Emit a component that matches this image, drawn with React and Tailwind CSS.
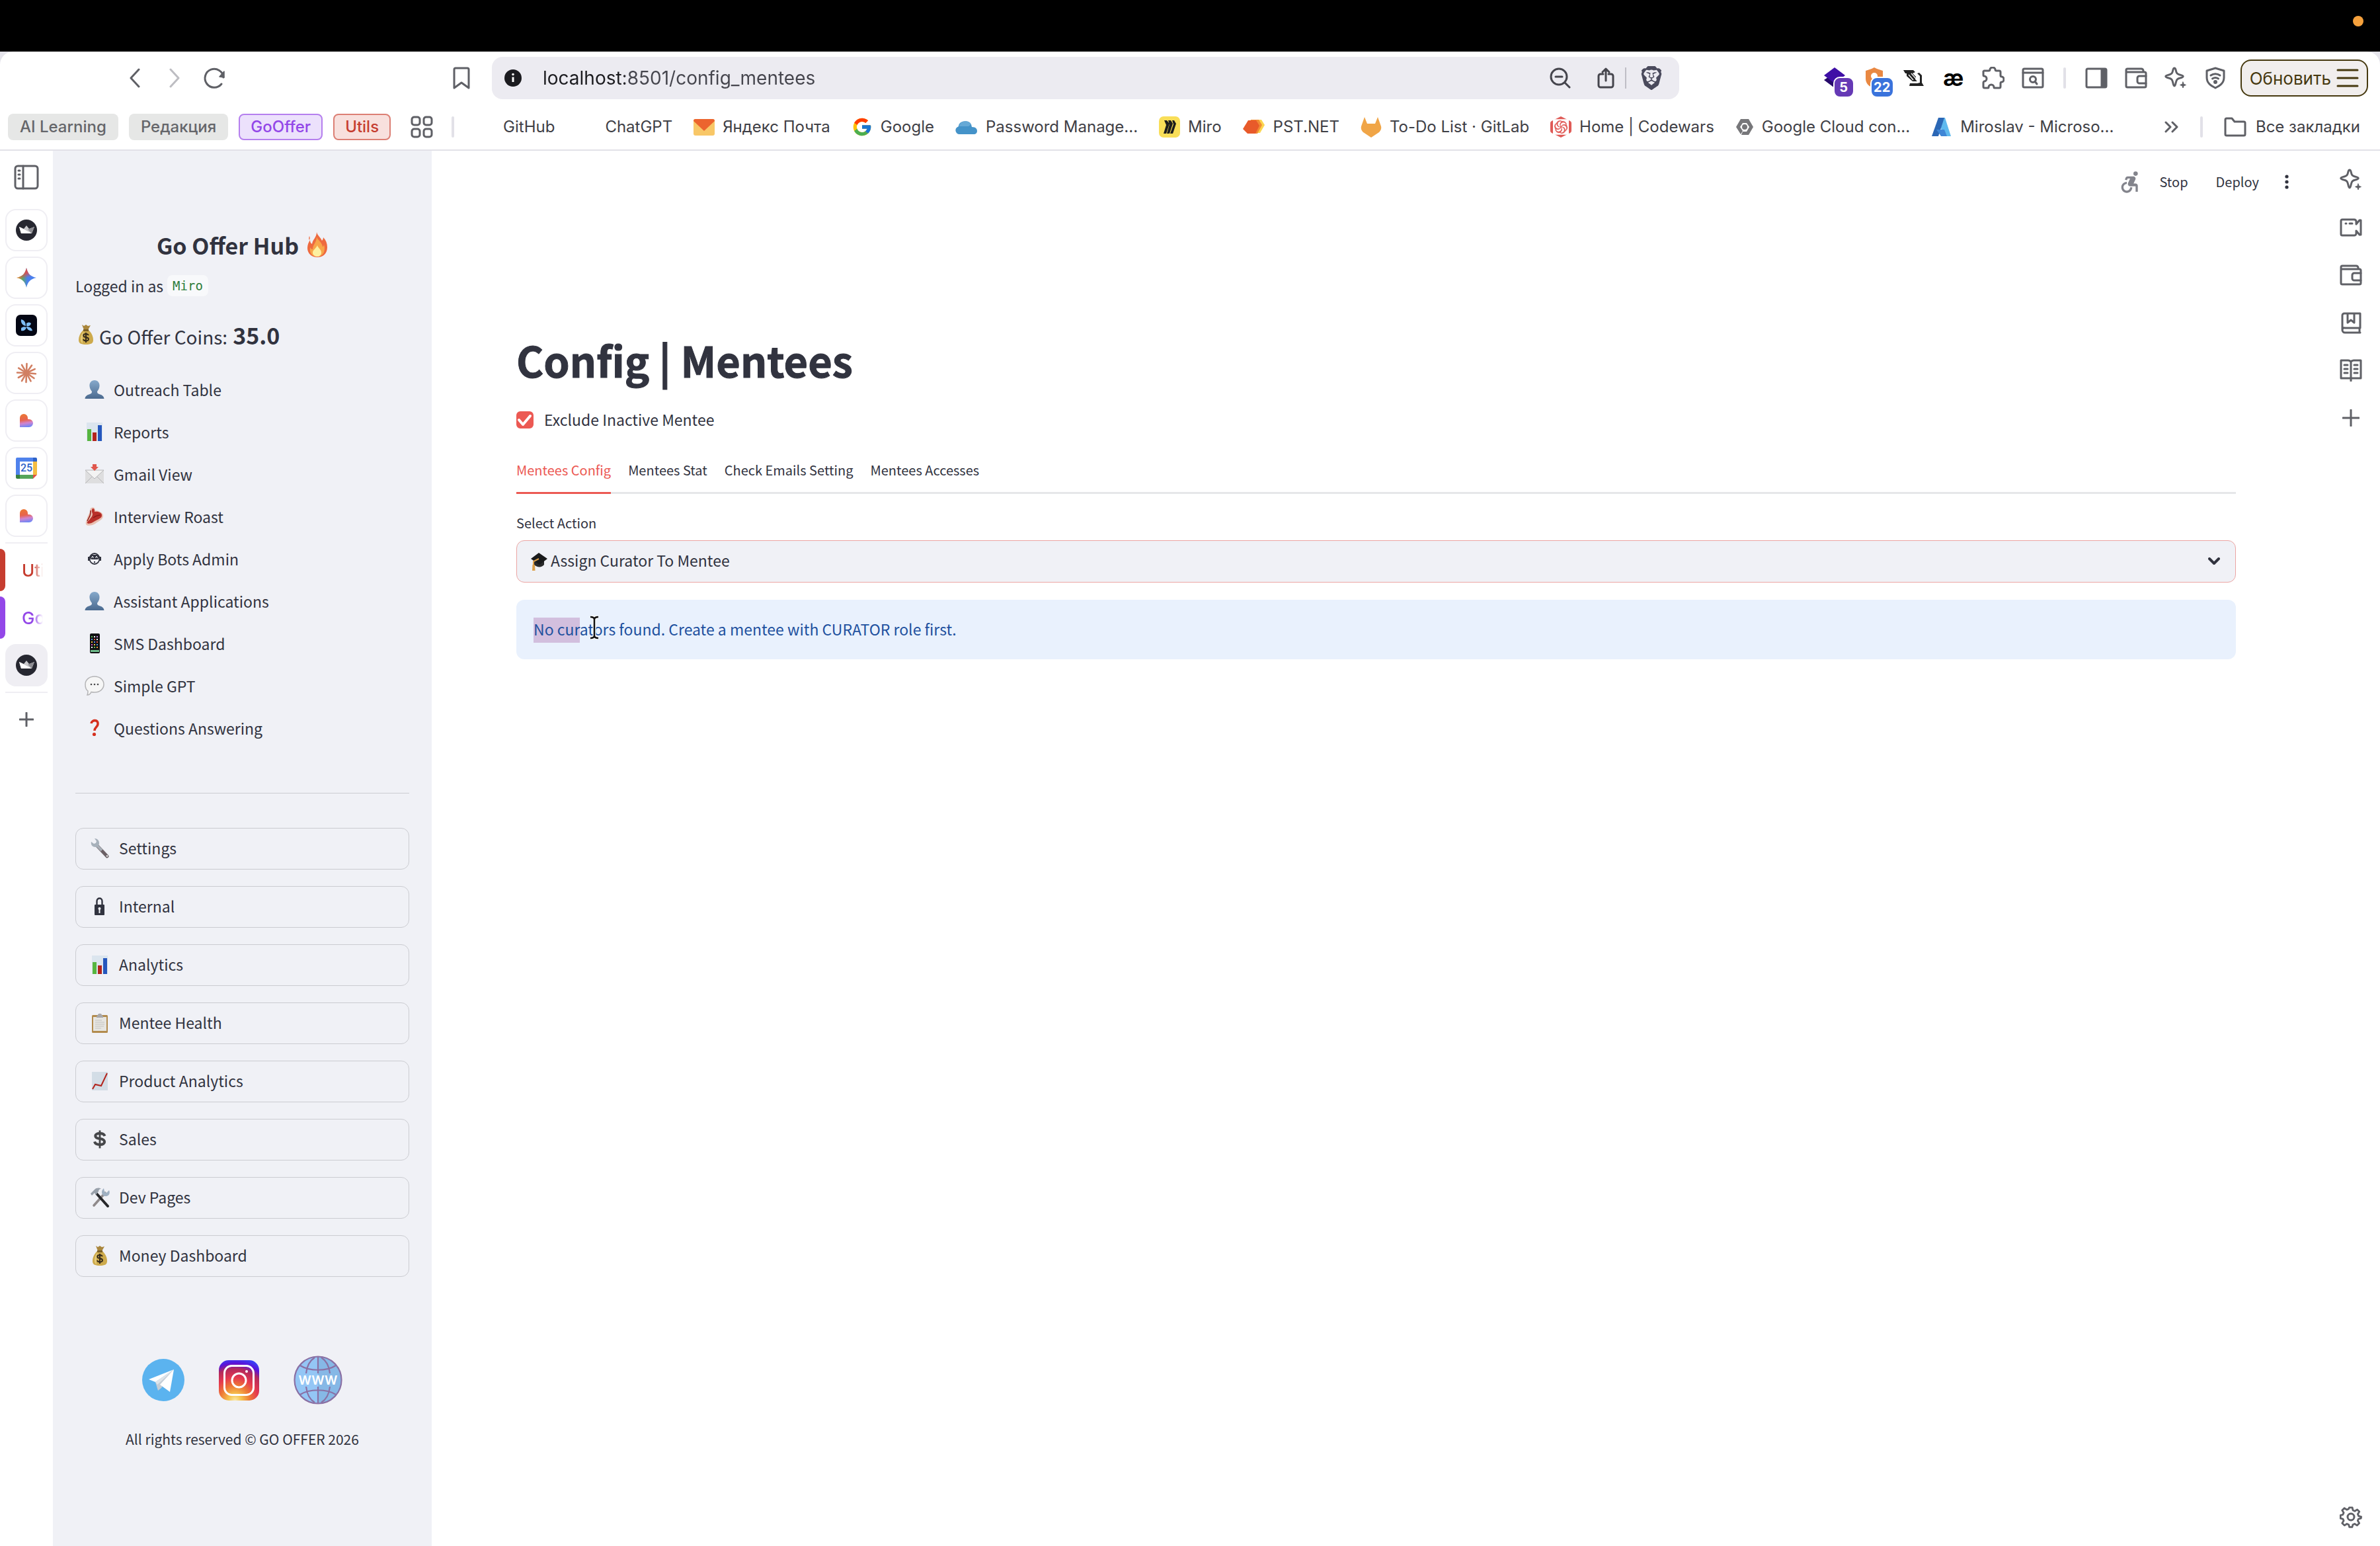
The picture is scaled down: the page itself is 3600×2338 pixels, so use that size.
import React, { useState } from 'react';
import { FcGoogle } from 'react-icons/fc';
import { SiBrave, SiCodewars } from 'react-icons/si';
import { MdAccessibleForward } from 'react-icons/md';

// Shared wrapper for the outlined browser icons
const Line = ({ w = 34, h = 34, sw = 3, className = '', children }) => (
  <svg
    width={w}
    height={h}
    viewBox={`0 0 ${w} ${h}`}
    fill="none"
    stroke="currentColor"
    strokeWidth={sw}
    strokeLinecap="round"
    strokeLinejoin="round"
    className={`shrink-0 ${className}`}
    aria-hidden="true"
  >
    {children}
  </svg>
);

const Pic = ({ w = 30, h = 30, className = '', children }) => (
  <svg width={w} height={h} viewBox={`0 0 ${w} ${h}`} className={`shrink-0 ${className}`} aria-hidden="true">
    {children}
  </svg>
);

/* ---------- browser icons ---------- */

const SparkleIcon = () => (
  <Line>
    <path d="M15 2c1.300 0 1.700 1 2.200 3.200.9 4.500 2 6 6.500 7 2.500.6 4.500.9 4.500 2.400s-2 1.900-4.500 2.400c-4.500 1-5.600 2.500-6.500 7C16.700 26.500 16.300 29 15 29s-1.700-2.500-2.200-5c-.9-4.500-2-6-6.500-7-2.500-.5-4.500-.9-4.500-2.400s2-1.800 4.500-2.400c4.500-1 5.600-2.500 6.500-7C13.300 3 13.700 2 15 2z" />
    <path d="M28 23l1.200 3.300 3.300 1.200-3.300 1.200L28 32l-1.200-3.300-3.300-1.200 3.300-1.200z" fill="currentColor" strokeWidth="1" />
  </Line>
);

const WalletIcon = () => (
  <Line>
    <path d="M2 8v21a2 2 0 0 0 2 2h26a2 2 0 0 0 2-2V10a2 2 0 0 0-2-2zM2 8V5a2 2 0 0 1 2-2h21a3 3 0 0 1 3 3v2" />
    <path d="M32 14H22a3 3 0 0 0-3 3v5a3 3 0 0 0 3 3h10" />
  </Line>
);

const PuzzleIcon = () => (
  <Line>
    <path d="M3 6h7q2 0 2-2a4 3 0 0 1 8 0q0 2 2 2h4a2 2 0 0 1 2 2v5q0 2 2 2a3 4 0 0 1 0 8q-2 0-2 2v5a2 2 0 0 1-2 2h-7q-1 0-1-1a4 4 0 0 0-8 0q0 1-1 1H4a2 2 0 0 1-2-2v-6q0-1 1-2a4 4 0 0 0 0-8q-1 0-1-2V7z" />
  </Line>
);

const PageSearchIcon = () => (
  <Line>
    <rect x="2" y="3" width="30" height="28" rx="2" />
    <path d="M2 9h30" />
    <circle cx="17" cy="19" r="4.500" />
    <path d="M20 22l3 4" />
  </Line>
);

const SidePanelIcon = () => (
  <Line>
    <rect x="2" y="3" width="30" height="28" rx="2" />
    <path d="M25 4h6v26h-6z" fill="currentColor" />
  </Line>
);

const ShieldWifiIcon = () => (
  <Line>
    <path d="M17 2l13 4v10c0 8-5 12-13 16C9 28 4 24 4 16V6z" />
    <path d="M10 13c4-3 10-3 14 0M12.500 18c3-2 6-2 9 0" />
    <circle cx="17" cy="23" r="1.500" fill="currentColor" />
  </Line>
);

const CameraIcon = () => (
  <Line>
    <path d="M4 5h18a3 3 0 0 1 3 3v4l5-6h2v22h-2l-5-6v4a3 3 0 0 1-3 3H4a2 2 0 0 1-2-2V7a2 2 0 0 1 2-2z" />
    <path d="M9 11h1M15 11h4" />
  </Line>
);

const BookIcon = () => (
  <Line>
    <path d="M31 25V3H7a3 3 0 0 0-3 3v22a4 4 0 0 0 4 4h23M4 28a3 3 0 0 1 4-3h23M30 25v7M12 3v14l5-4 5 4V3" />
  </Line>
);

const OpenBookIcon = () => (
  <Line>
    <path d="M17 4c-1-1-2-2-4-2H2v27h15V4zM17 4c1-1 2-2 4-2h11v27H17v4" />
    <path d="M7 9h5M7 15h5M7 21h5M22 9h5M22 15h5M22 21h5" />
  </Line>
);

const PlusIcon = ({ size = 26 }) => (
  <Line w={size} h={size}>
    <path d={`M${size / 2} 1v${size - 2}M1 ${size / 2}h${size - 2}`} />
  </Line>
);

const GearIcon = () => (
  <Line>
    <path d="M14.500 2h5l1 4.500 3 1.300 4-2.500 3.400 3.400-2.500 4 1.300 3L34 17l-.5 2.500-4 1-1.200 3 2.500 4-3.500 3.500-4-2.500-3 1.300-1 4h-4.600l-1-4-3-1.300-4 2.500L3 27.500l2.500-4-1.300-3-4-1v-5l4-1 1.300-3-2.500-4L6.500 3l4 2.500 3-1.300z" transform="translate(1 1) scale(.93)" />
    <circle cx="17" cy="17" r="5" />
  </Line>
);

/* ---------- bookmark logos ---------- */

const MailLogo = () => (
  <Pic w={32} h={32}>
    <rect y="4" width="32" height="25" rx="3" fill="#f8c767" />
    <path d="M3 4h26a3 3 0 0 1 3 3L16 22 0 7a3 3 0 0 1 3-3z" fill="#ec642e" />
  </Pic>
);

const CloudLogo = () => (
  <Pic w={34} h={32}>
    <path d="M6 27a6 6 0 0 1-4-10l3-2c0-8 14-11 19-3l1 4c6 0 8 3 8 6s-2 5-5 5z" fill="#4493c9" />
    <path d="M6 15c0-8 14-11 18-3l-4 3z" fill="#66a9d6" />
  </Pic>
);

const MiroLogo = () => (
  <Pic w={32} h={32}>
    <rect width="32" height="32" rx="7" fill="#f9de58" />
    <path d="M8 6h4l4 5-5 15H7l4-13zM14 6h4l3 5-5 15h-4l4-14zM20 6h3l3 5-5 15h-4l5-14z" fill="#1c1c1c" />
  </Pic>
);

const PstLogo = () => (
  <Pic w={34} h={32}>
    <path d="M16 5h12l5 8-7 12H14z" fill="#fbd54f" />
    <path d="M12 5h12l5 8-7 13H9z" fill="#f28b33" />
    <path d="M8 6h12l5 8-6 12H7L0 19z" fill="#e85a2a" />
  </Pic>
);

const GitlabLogo = () => (
  <Pic w={32} h={32}>
    <path d="M6 1l4 10h12l4-10 5 14c1 4-1 7-3 9L16 32 4 24c-2-2-4-5-3-9z" fill="#f0a547" />
  </Pic>
);

const CodewarsLogo = () => (
  <span className="relative flex size-8 shrink-0 items-center justify-center">
    <Pic w={32} h={32} className="absolute inset-0">
      <path d="M16 0l14 7q2 1 2 3v12q0 2-2 3l-14 7-14-7q-2-1-2-3V10q0-2 2-3z" fill="#e05b57" />
    </Pic>
    <SiCodewars className="relative size-6 text-white" />
  </span>
);

const GcloudLogo = () => (
  <Pic w={28} h={28}>
    <path d="M8 2h12l2 4-5 2H11l-4 6 4 6-3 5L1 14zM20 2l7 12-7 12H9l2-5h6l4-7-4-6z" fill="#77777a" />
    <circle cx="14" cy="14" r="4" fill="#77777a" />
  </Pic>
);

const AzureLogo = () => (
  <Pic w={32} h={32}>
    <path d="M11 2h10l9 28H18z" fill="#5fb9ee" />
    <path d="M11 2h9L11 30H1z" fill="#2b67b5" />
    <path d="M8 20h12l4 10H15z" fill="#3f86d6" />
  </Pic>
);

/* ---------- vertical tab logos ---------- */

const CrownLogo = () => (
  <Pic w={32} h={32}>
    <circle cx="16" cy="16" r="16" fill="#262730" />
    <path d="M5 11l7 3 4-5 4 5 8-3-4 10H8z" fill="#c9c9cc" />
    <path d="M5 11l19 10H8z" fill="#fff" />
    <path d="M28 11l-4 10-6-6z" fill="#8d8d92" />
  </Pic>
);

const GeminiLogo = () => (
  <Pic w={30} h={30}>
    <defs>
      <linearGradient id="gemA" x1="0" y1=".5" x2="1" y2=".5">
        <stop offset="0" stopColor="#f5c02e" />
        <stop offset=".3" stopColor="#5aa767" />
        <stop offset=".55" stopColor="#4a80ee" />
        <stop offset="1" stopColor="#4a80ee" />
      </linearGradient>
      <linearGradient id="gemB" x1=".4" y1="0" x2=".55" y2=".5">
        <stop offset="0" stopColor="#e8493f" />
        <stop offset=".55" stopColor="#e8493f" stopOpacity=".8" />
        <stop offset="1" stopColor="#e8493f" stopOpacity="0" />
      </linearGradient>
    </defs>
    <path d="M15 0c2 9 6 13 15 15-9 2-13 6-15 15C13 21 9 17 0 15 9 13 13 9 15 0z" fill="url(#gemA)" />
    <path d="M15 0c2 9 6 13 15 15-9 2-13 6-15 15C13 21 9 17 0 15 9 13 13 9 15 0z" fill="url(#gemB)" />
  </Pic>
);

const PetalLogo = () => (
  <Pic w={32} h={32}>
    <rect width="32" height="32" rx="7" fill="#040714" />
    <path d="M8 7c5 1 7 5 7 10-5-1-8-5-7-10zM16 13c3-2 5-2 7 0-1 4-4 5-7 4zM8 20c3-2 5-2 8-1-1 4-4 6-8 5zM16 18c5 0 8 2 9 6-4 1-8-1-9-6z" fill="#7dbcf5" />
  </Pic>
);

const BurstLogo = () => (
  <Pic w={32} h={32}>
    {[5, 35, 62, 92, 120, 150, 182, 212, 240, 272, 305, 335].map((deg) => (
      <path
        key={deg}
        d="M16 16h14"
        stroke="#d17f62"
        strokeWidth="2.600"
        strokeLinecap="round"
        transform={`rotate(${deg} 16 16)`}
      />
    ))}
    <circle cx="16" cy="16" r="4.500" fill="#d17f62" />
  </Pic>
);

const HeartLogo = () => (
  <Pic w={20} h={20}>
    <defs>
      <linearGradient id="lov" x1=".3" y1="0" x2=".45" y2="1">
        <stop offset="0" stopColor="#ec7733" />
        <stop offset=".45" stopColor="#e7634f" />
        <stop offset=".7" stopColor="#d084d0" />
        <stop offset="1" stopColor="#6d86f6" />
      </linearGradient>
    </defs>
    <path d="M0 6a6 6 0 0 1 12 0v2h2a6 6 0 0 1 0 12H0z" fill="url(#lov)" />
  </Pic>
);

const CalendarLogo = () => (
  <span className="relative flex size-8 items-center justify-center">
    <Pic w={32} h={32} className="absolute inset-0">
      <path d="M2 0h24v6H6v20H0V2a2 2 0 0 1 2-2z" fill="#4f82ec" />
      <path d="M26 0h4a2 2 0 0 1 2 2v4h-6z" fill="#2d62c8" />
      <path d="M26 6h6v20h-6z" fill="#f4bd42" />
      <path d="M6 26h20v6H6z" fill="#55a55a" />
      <path d="M0 26h6v6H2a2 2 0 0 1-2-2z" fill="#377f40" />
      <path d="M26 26h6l-6 6z" fill="#df5144" />
      <path d="M6 6h20v20H6z" fill="#fff" />
    </Pic>
    <span className="relative font-[Roboto] text-[16px] leading-none font-medium text-[#2d62c8]">25</span>
  </span>
);

/* ---------- emoji drawings ---------- */

const Fire = () => (
  <Pic w={32} h={38}>
    <path d="M15 0c1 5 6 8 8 13 1-1 2-3 2-5 4 4 6 9 6 15 0 9-6 15-15 15S1 32 1 24c0-5 2-9 4-12 0 3 1 5 3 6 1-7 7-10 7-18zM4 6c1 2 1 4 0 6-1-1-1-4 0-6z" fill="#ee6a3f" />
    <path d="M15 7c1 5 8 8 9 15 1 0 2-2 2-3 3 9-1 18-10 18S4 31 5 23c1 2 2 3 4 3 0-7 6-10 6-19z" fill="#f8a549" />
    <path d="M16 20c1 4 6 6 6 11 0 4-3 6-6 6s-7-2-7-6c0-4 5-6 7-11z" fill="#fdf0a0" />
  </Pic>
);

const MoneyBag = ({ className }) => (
  <Pic w={24} h={30} className={className}>
    <path d="M6 0l3 2 3-2 3 2 4-1-4 7H9z" fill="#a9863c" />
    <path d="M8 8h8c4 4 7 9 7 15 0 5-3 7-11 7S1 28 1 23C1 17 4 12 8 8z" fill="#cdaa4c" />
    <path d="M9 10c-3 3-5 7-5 12 0 3 1 5 3 6-1-6 0-12 2-18z" fill="#e6cd7c" />
    <path d="M8 7h8v3H8z" fill="#7c6127" />
    <path d="M16 16c-1-1.500-2.500-2-4-2-5 0-5 4.500 0 5s5.500 5.500 0 5.500c-2 0-3.500-1-4-2.500M12 12v15" stroke="#33291a" strokeWidth="2" fill="none" />
  </Pic>
);

const Person = () => (
  <Pic w={30} h={30}>
    <defs>
      <linearGradient id="bust" x1="0" y1="0" x2="0" y2="1">
        <stop offset="0" stopColor="#86a9cb" />
        <stop offset="1" stopColor="#4b6a8f" />
      </linearGradient>
    </defs>
    <path d="M15 1c5 0 8 4 7.500 9-.4 4-2 6-3.500 8 0 2 .5 3 3 4 4 1 7 3 7.500 7H.5c.5-4 3.500-6 7.500-7 2.500-1 3-2 3-4-1.500-2-3.100-4-3.500-8C7 5 10 1 15 1z" fill="url(#bust)" />
  </Pic>
);

const Bars = () => (
  <Pic w={30} h={30}>
    <path d="M3 1h24v28H3z" fill="#dbe5ee" />
    <path d="M4 11h6v18H4z" fill="#56b53f" />
    <path d="M12 16h6v13h-6z" fill="#b3241d" />
    <path d="M20 5h6v24h-6z" fill="#2557bd" />
  </Pic>
);

const Envelope = () => (
  <Pic w={30} h={30}>
    <rect x="1" y="9" width="28" height="20" rx="1" fill="#dededf" />
    <path d="M1 9l14 13L29 9z" fill="#f3f3f3" stroke="#b5b5b8" />
    <path d="M1 29l10-10M29 29L19 19" stroke="#b5b5b8" />
    <path d="M12 0h6v4h3l-6 6-6-6h3z" fill="#e0574d" />
  </Pic>
);

const Meat = () => (
  <Pic w={30} h={30}>
    <path d="M10 2c3-2 6 0 6 4 5 0 12 3 12 8 0 6-7 8-12 12-3 2-10 4-13 2s0-7 1-11 3-6 4-9c0-3 0-5 2-6z" fill="#e9c0b2" />
    <path d="M12 3c3 0 3 2 3 5 6-1 12 2 11 6 0 4-8 6-12 9-3 2-8 4-10 2-1-2 2-3 4-6s4-4 4-8c-1-3-2-5 0-8z" fill="#b9302a" />
    <path d="M9 6c0 4 0 7-2 10l-3 6M13 17c4-3 7-4 11-4" stroke="#8e1c19" strokeWidth="1.500" fill="none" />
  </Pic>
);

const BotFace = () => (
  <Pic w={30} h={30}>
    <ellipse cx="15" cy="15" rx="7.500" ry="8" fill="none" stroke="#31333f" strokeWidth="1.800" />
    <rect x="8" y="9" width="14" height="7" rx="3.500" fill="#31333f" />
    <path d="M10.500 14l1.500-3 1.500 3M16.500 14l1.500-3 1.500 3" stroke="#f0f2f6" fill="none" />
    <path d="M6 12v6M24 12v6M14 20h2" stroke="#31333f" strokeWidth="2" />
  </Pic>
);

const Phone = () => (
  <Pic w={30} h={30}>
    <rect x="8" y="0" width="15" height="30" rx="2" fill="#111113" />
    {[4, 8, 12, 16, 20].map((y, i) => (
      <g key={y}>
        <rect x="10" y={y} width="2" height="2" fill={['#59c055', '#4f9de0', '#f0c541', '#d457c4', '#f4f4f4'][i]} />
        <rect x="14" y={y} width="2" height="2" fill={['#f4f4f4', '#e3564a', '#5f7fe8', '#f0c541', '#59c055'][i]} />
        <rect x="18" y={y} width="2" height="2" fill={['#c98ae0', '#f4f4f4', '#e3564a', '#4f9de0', '#f09a41'][i]} />
      </g>
    ))}
    <rect x="9" y="25" width="13" height="3" fill="#6dbb8a" />
  </Pic>
);

const Bubble = () => (
  <Pic w={30} h={30}>
    <path d="M15 1c8 0 14 5 14 12s-6 12-14 12c-2 0-3 0-5-.5C9 27 7 29 4 29c1-2 1-4 1-6-3-2-4-6-4-10C1 6 7 1 15 1z" fill="#f6f6f6" stroke="#b4b4b6" strokeWidth="1.500" />
    <g fill="#4a4a4c">
      <circle cx="10" cy="13" r="1.300" />
      <circle cx="15" cy="13" r="1.300" />
      <circle cx="20" cy="13" r="1.300" />
    </g>
  </Pic>
);

const Question = () => (
  <Pic w={30} h={30}>
    <path d="M10 8c1-6 11-6 10 1 0 4-5 5-5 10" stroke="#d5301f" strokeWidth="3.600" fill="none" />
    <circle cx="14.500" cy="24.500" r="2.600" fill="#d5301f" />
  </Pic>
);

const Wrench = () => (
  <Pic w={30} h={30}>
    <path d="M10 10l16 17" stroke="#6b6065" strokeWidth="5" strokeLinecap="round" />
    <path d="M9 9l9 9" stroke="#a7adb5" strokeWidth="4" />
    <path d="M2 5l4 3 3-1 1-3-3-4c4 0 7 3 7 7s-3 6-6 6C4 13 1 10 2 5z" fill="#a7b1bb" />
    <circle cx="26" cy="26.500" r="1.300" fill="#eee" />
  </Pic>
);

const Padlock = () => (
  <Pic w={30} h={30}>
    <path d="M10.500 13V7c0-6 8-6 8 0v6" stroke="#31333f" strokeWidth="2.400" fill="none" />
    <rect x="7" y="12" width="15" height="16" rx="1" fill="#31333f" />
    <circle cx="14.500" cy="18" r="2" fill="#f0f2f6" />
    <path d="M14.500 18v7" stroke="#f0f2f6" strokeWidth="2" />
  </Pic>
);

const Clipboard = () => (
  <Pic w={30} h={30}>
    <rect x="3" y="3" width="24" height="27" rx="1.500" fill="#b28b4d" />
    <rect x="5" y="6" width="20" height="21" fill="#e6e5e1" />
    <path d="M10 5l2-2c0-3 6-3 6 0l2 2v2H10z" fill="#a8a8aa" />
    <path d="M8 11h10M8 14h14M8 17h14M8 20h13M8 23h9" stroke="#c4c3c0" />
  </Pic>
);

const ChartUp = () => (
  <Pic w={30} h={30}>
    <path d="M3 1h24v28H3z" fill="#d3dde6" />
    <path d="M4 27l4-7 9 2 9-19" stroke="#b3241d" strokeWidth="2" fill="none" />
  </Pic>
);

const Dollar = () => (
  <Pic w={30} h={30}>
    <path d="M22.500 10c-1-3-4-4-7.500-4-9 0-9 7 0 8s10 9 0 9c-4 0-7-1-8-4.500" stroke="#46474a" strokeWidth="4" fill="none" />
    <path d="M15 1.500v27" stroke="#46474a" strokeWidth="2.800" />
  </Pic>
);

const Tools = () => (
  <Pic w={30} h={30}>
    <path d="M23 8L6 27" stroke="#8f8a8b" strokeWidth="3.600" strokeLinecap="round" />
    <path d="M10 9l17 19" stroke="#27282b" strokeWidth="4" strokeLinecap="round" />
    <path d="M1 9l6-6c3-3 7-3 10-1-3 0-4 2-4 4L9 11l-2-3-4 4z" fill="#98a0aa" />
    <path d="M21 1l1 5 3 2 4-4c2 4 0 9-5 9-5 1-9-7-3-12z" fill="#9fb0c2" />
  </Pic>
);

const GradCap = () => (
  <Pic w={26} h={30}>
    <path d="M6 12v8c4 4 11 5 15 0v-8z" fill="#2a2a2b" />
    <path d="M13 2l13 9-12 9L1 11z" fill="#1a1a1b" />
    <path d="M13 11L5 15v13" stroke="#dca04a" strokeWidth="2" fill="none" />
    <path d="M3.500 20h3.500l.5 9H3z" fill="#dca04a" />
  </Pic>
);

/* ---------- social logos ---------- */

const TelegramLogo = () => (
  <Pic w={64} h={64}>
    <circle cx="32" cy="32" r="32" fill="#5bb3ef" />
    <path d="M20 35l28-19-19 28-5 4z" fill="#c4cdd6" />
    <path d="M48 16L10 31l10 4z" fill="#fff" />
    <path d="M48 16L20 35l3 4z" fill="#dfe4e9" />
    <path d="M48 16l-6 34-15-11z" fill="#fff" />
  </Pic>
);

const InstagramLogo = () => (
  <Pic w={61} h={61}>
    <defs>
      <radialGradient id="insta" cx=".4" cy="1" r="1.050">
        <stop offset="0" stopColor="#fbe9a8" />
        <stop offset=".15" stopColor="#f6c44e" />
        <stop offset=".35" stopColor="#ee7a35" />
        <stop offset=".55" stopColor="#e5384f" />
        <stop offset=".75" stopColor="#b22a5c" />
        <stop offset=".88" stopColor="#5a12d8" />
        <stop offset="1" stopColor="#3a3ff5" />
      </radialGradient>
    </defs>
    <rect width="61" height="61" rx="15" fill="url(#insta)" />
    <rect x="8.500" y="8.500" width="44" height="44" rx="11" fill="none" stroke="#fff" strokeWidth="3" />
    <circle cx="30.500" cy="30.500" r="10.500" fill="none" stroke="#fff" strokeWidth="3" />
    <circle cx="42" cy="17" r="2" fill="#fff" />
  </Pic>
);

const GlobeLogo = () => (
  <span className="relative flex size-[74px] items-center justify-center">
    <Pic w={74} h={74} className="absolute inset-0">
      <circle cx="37" cy="37" r="36" fill="#94c6f5" />
      <path d="M37 1a36 36 0 0 1 0 72z" fill="#86b8e6" />
      <g fill="none" stroke="#8a70a4" strokeWidth="2.200">
        <circle cx="37" cy="37" r="35.500" />
        <path d="M37 2v25M37 47v25M32 3C24 8 20 17 19 27M42 3c8 5 12 14 13 24M19 47c1 10 5 19 13 24M55 47c-1 10-5 19-13 24M10 15c14 9 40 9 54 0M10 59c14-9 40-9 54 0" />
      </g>
    </Pic>
    <span className="relative font-[Inter] text-[19px] leading-none font-semibold text-white">WWW</span>
  </span>
);

/* ---------- data ---------- */

const bookmarks = [
  { label: 'GitHub', logo: <span className="size-8" /> },
  { label: 'ChatGPT', logo: <span className="size-8" /> },
  { label: 'Яндекс Почта', logo: <MailLogo /> },
  { label: 'Google', logo: <FcGoogle className="size-8" /> },
  { label: 'Password Manage...', logo: <CloudLogo /> },
  { label: 'Miro', logo: <MiroLogo /> },
  { label: 'PST.NET', logo: <PstLogo /> },
  { label: 'To-Do List · GitLab', logo: <GitlabLogo /> },
  { label: 'Home | Codewars', logo: <CodewarsLogo /> },
  { label: 'Google Cloud con...', logo: <GcloudLogo /> },
  { label: 'Miroslav - Microso...', logo: <AzureLogo /> },
];

const pinnedTabs = [
  { name: 'Streamlit', logo: <CrownLogo /> },
  { name: 'Gemini', logo: <GeminiLogo /> },
  { name: 'Petal', logo: <PetalLogo /> },
  { name: 'Claude', logo: <BurstLogo /> },
  { name: 'Lovable', logo: <HeartLogo /> },
  { name: 'Calendar', logo: <CalendarLogo /> },
  { name: 'Lovable project', logo: <HeartLogo /> },
];

const navItems = [
  { label: 'Outreach Table', icon: <Person /> },
  { label: 'Reports', icon: <Bars /> },
  { label: 'Gmail View', icon: <Envelope /> },
  { label: 'Interview Roast', icon: <Meat /> },
  { label: 'Apply Bots Admin', icon: <BotFace /> },
  { label: 'Assistant Applications', icon: <Person /> },
  { label: 'SMS Dashboard', icon: <Phone /> },
  { label: 'Simple GPT', icon: <Bubble /> },
  { label: 'Questions Answering', icon: <Question /> },
];

const sections = [
  { label: 'Settings', icon: <Wrench /> },
  { label: 'Internal', icon: <Padlock /> },
  { label: 'Analytics', icon: <Bars /> },
  { label: 'Mentee Health', icon: <Clipboard /> },
  { label: 'Product Analytics', icon: <ChartUp /> },
  { label: 'Sales', icon: <Dollar /> },
  { label: 'Dev Pages', icon: <Tools /> },
  { label: 'Money Dashboard', icon: <MoneyBag /> },
];

const tabs = ['Mentees Config', 'Mentees Stat', 'Check Emails Setting', 'Mentees Accesses'];

const sideTools = [
  { name: 'Assistant', icon: <SparkleIcon /> },
  { name: 'Talk', icon: <CameraIcon /> },
  { name: 'Wallet', icon: <WalletIcon /> },
  { name: 'Bookmarks', icon: <BookIcon /> },
  { name: 'Reading list', icon: <OpenBookIcon /> },
  { name: 'Add', icon: <PlusIcon /> },
];

const ToolButton = ({ name, children }) => (
  <button aria-label={name} className="relative flex h-15 w-15 shrink-0 items-center justify-center">
    {children}
  </button>
);

const Toolbar = () => (
  <div className="flex h-20 items-center pr-[18px] pl-[174px] text-[#5f6066]">
    <ToolButton name="Back">
      <Line w={16} h={30}>
        <path d="M14 2L2 15l12 13" />
      </Line>
    </ToolButton>
    <ToolButton name="Forward">
      <Line w={16} h={30} className="text-[#bdbdc2]">
        <path d="M2 2l12 13L2 28" />
      </Line>
    </ToolButton>
    <ToolButton name="Reload">
      <Line>
        <path d="M28 26a14 14 0 1 1 3-10" />
        <path d="M32 7v9l-7-1z" fill="currentColor" strokeWidth="1.500" />
      </Line>
    </ToolButton>
    <div className="flex w-[390px] justify-end pr-[33px]">
      <button aria-label="Bookmark this page">
        <Line w={26} h={34}>
          <path d="M2 4a2 2 0 0 1 2-2h18a2 2 0 0 1 2 2v28l-11-8-11 8z" />
        </Line>
      </button>
    </div>
    <div className="flex h-16 w-[1796px] shrink items-center rounded-2xl bg-[#ecebf1] pr-6 pl-[19px] text-[#45454d]">
      <Pic w={26} h={26}>
        <circle cx="13" cy="13" r="13" fill="#1b1b1f" />
        <path d="M13 11.500V19" stroke="#fff" strokeWidth="3" />
        <circle cx="13" cy="7.500" r="1.800" fill="#fff" />
      </Pic>
      <input
        type="text"
        aria-label="Address"
        defaultValue="localhost:8501/config_mentees"
        className="ml-8 min-w-0 flex-1 bg-[linear-gradient(90deg,#1b1b1f_124px,#45454d_124px)] bg-clip-text text-[28px] text-transparent outline-none"
      />
      <button aria-label="Zoom out" className="mr-10">
        <Line w={32} h={32}>
          <circle cx="14" cy="14" r="12" />
          <path d="M23 23l7 7M9 14h10" />
        </Line>
      </button>
      <button aria-label="Share" className="mr-4">
        <Line w={26} h={32}>
          <path d="M9 10H5a3 3 0 0 0-3 3v14a3 3 0 0 0 3 3h16a3 3 0 0 0 3-3V13a3 3 0 0 0-3-3h-4M13 20V2M8 7l5-5 5 5" />
        </Line>
      </button>
      <span className="mr-5 h-8 w-0.5 bg-[#bfbec6]" />
      <button aria-label="Shields">
        <SiBrave className="size-9 text-[#4a4a5c]" />
      </button>
    </div>
    <div className="ml-auto flex items-center">
      <ToolButton name="Extension">
        <Pic w={34} h={34}>
          <path d="M17 9l16 11-16 12L1 20z" fill="#260a6b" />
          <path d="M17 1l16 12-16 12L1 13z" fill="#3f0fa6" />
        </Pic>
        <span className="absolute right-0 bottom-0 flex size-8 items-center justify-center rounded-[10px] border-2 border-white bg-[#6539b5] text-[20px] leading-none font-bold text-white">5</span>
      </ToolButton>
      <ToolButton name="Wallet extension">
        <Pic w={34} h={34}>
          <path d="M4 6l9-3 4-2 4 2 9 3v12c0 8-6 12-13 15C10 30 4 26 4 18z" fill="#e98842" />
          <circle cx="17" cy="14" r="5" fill="#fff" />
        </Pic>
        <span className="absolute right-0 bottom-0 flex h-8 w-9 items-center justify-center rounded-[10px] border-2 border-white bg-[#3a73dc] text-[20px] leading-none font-bold text-white">22</span>
      </ToolButton>
      <ToolButton name="Inspector">
        <Pic w={32} h={26}>
          <path d="M0 1h15l3 3-4 2 5 5-1 4 3 3h-7l-9-8V6H3z" fill="#222" />
          <path d="M8 8l7 8M12 6l7 8" stroke="#fff" strokeWidth="1.200" />
          <path d="M21 6l3-1 4 4v11l3 5H9l1-4h11l4-1V10z" fill="#222" />
        </Pic>
      </ToolButton>
      <ToolButton name="Æ">
        <span className="font-[Inter] text-[34px] leading-none font-bold text-black">æ</span>
      </ToolButton>
      <ToolButton name="Extensions"><PuzzleIcon /></ToolButton>
      <ToolButton name="Search tabs"><PageSearchIcon /></ToolButton>
      <span className="mr-4 ml-4 h-8 w-1 rounded bg-[#e2e1e8]" />
      <ToolButton name="Side panel"><SidePanelIcon /></ToolButton>
      <ToolButton name="Wallet"><WalletIcon /></ToolButton>
      <ToolButton name="Assistant"><SparkleIcon /></ToolButton>
      <ToolButton name="VPN"><ShieldWifiIcon /></ToolButton>
      <button className="ml-2 flex h-14 items-center gap-2 rounded-2xl border-2 border-[#46390f] bg-[#f1eeed] px-3 text-[26px] text-[#46390f]">
        Обновить
        <Line w={34} h={30}>
          <path d="M2 3h30M2 15h30M2 27h30" />
        </Line>
      </button>
    </div>
  </div>
);

const BookmarkBar = () => (
  <div className="flex h-[70px] items-center border-b-2 border-[#e2e1e8] pr-[30px] pl-3 text-[24px] whitespace-nowrap text-[#3f4046]">
    <div className="flex gap-4 font-medium">
      <button className="h-10 rounded-lg bg-[#e6e7e6] px-[18px] text-[#65666a]">AI Learning</button>
      <button className="h-10 rounded-lg bg-[#e6e7e6] px-[18px] text-[#65666a]">Редакция</button>
      <button className="h-10 rounded-lg border-2 border-[#b57fee] bg-[#ece1fc] px-4 text-[#9347e8]">GoOffer</button>
      <button className="h-10 rounded-lg border-2 border-[#dc7f74] bg-[#f8e0dd] px-4 text-[#c63d2f]">Utils</button>
    </div>
    <button aria-label="All groups" className="ml-[30px]">
      <Line className="text-[#5f6066]">
        <rect x="2" y="2" width="12" height="12" rx="3.500" />
        <rect x="20" y="2" width="12" height="12" rx="3.500" />
        <rect x="2" y="20" width="12" height="12" rx="3.500" />
        <rect x="20" y="20" width="12" height="12" rx="3.500" />
      </Line>
    </button>
    <span className="mr-[30px] ml-7 h-8 w-1 rounded bg-[#e2e1e8]" />
    <nav className="flex gap-8">
      {bookmarks.map((b) => (
        <a key={b.label} href="#" className="flex items-center gap-3">
          {b.logo}
          {b.label}
        </a>
      ))}
    </nav>
    <button aria-label="More bookmarks" className="ml-auto text-[#5f6066]">
      <Line w={22} h={18}>
        <path d="M2 2l7 7-7 7M12 2l7 7-7 7" />
      </Line>
    </button>
    <span className="mr-8 ml-8 h-8 w-1 rounded bg-[#e2e1e8]" />
    <a href="#" className="flex items-center gap-3.5">
      <Line w={34} h={30} className="text-[#5f6066]">
        <path d="M2 4a2 2 0 0 1 2-2h8l4 5h14a2 2 0 0 1 2 2v17a2 2 0 0 1-2 2H4a2 2 0 0 1-2-2z" />
      </Line>
      Все закладки
    </a>
  </div>
);

const TabRail = () => (
  <div className="flex w-20 shrink-0 flex-col items-center bg-white pt-[21px] text-[#5f6066]">
    <button aria-label="Toggle tab rail" className="mb-[29px]">
      <Line w={38} h={38}>
        <rect x="2" y="2" width="34" height="34" rx="4" />
        <path d="M14 2v34M7 9h2M7 15h2M7 21h2" />
      </Line>
    </button>
    <div className="flex flex-col gap-2">
      {pinnedTabs.map((t) => (
        <button key={t.name} aria-label={t.name} className="flex size-16 items-center justify-center rounded-2xl border-2 border-[#efeef3]">
          {t.logo}
        </button>
      ))}
      <hr className="h-0.5 border-0 bg-[#efeef3]" />
    </div>
    <div className="mt-2 flex w-full flex-col gap-2 text-[26px] font-medium">
      <button className="flex h-16 items-center text-[#c63d2f]">
        <span className="h-16 w-2 rounded-r-lg bg-[#c63d2f]" />
        <span className="ml-[25px] w-8 overflow-hidden [mask-image:linear-gradient(90deg,#000_50%,transparent)]">Utils</span>
      </button>
      <button className="flex h-16 items-center text-[#9347e8]">
        <span className="h-16 w-2 rounded-r-lg bg-[#9347e8]" />
        <span className="ml-[25px] w-8 overflow-hidden [mask-image:linear-gradient(90deg,#000_50%,transparent)]">GoOffer</span>
      </button>
    </div>
    <button aria-label="Current tab" className="mt-2 flex size-16 items-center justify-center rounded-2xl bg-[#efeef3]">
      <CrownLogo />
    </button>
    <hr className="mt-2 h-0.5 w-16 border-0 bg-[#efeef3]" />
    <button aria-label="New tab" className="mt-2 flex size-16 items-center justify-center">
      <PlusIcon size={22} />
    </button>
  </div>
);

const Sidebar = () => (
  <aside className="w-[573px] shrink-0 bg-[#f0f1f6] px-[34px] pt-[119px] font-['Noto_Sans_CJK_SC',sans-serif] text-[23px] text-[#31333f]">
    <h2 className="flex h-[46px] items-center justify-center gap-3 text-[34px] font-bold">
      Go Offer Hub
      <Fire />
    </h2>
    <p className="mt-5 flex h-[38px] items-center gap-1.5">
      Logged in as
      <code className="rounded-lg bg-[#f8f9fb] px-2 font-['DejaVu_Sans_Mono',monospace] text-[19px] leading-8 text-[#2f7d3b]">Miro</code>
    </p>
    <p className="mt-8 flex h-12 items-baseline gap-2 pl-1 text-[28px] leading-[48px]">
      <MoneyBag className="-mb-1" />
      Go Offer Coins:
      <strong className="text-[34px]">35.0</strong>
    </p>
    <nav className="mt-[27px]">
      {navItems.map((item) => (
        <a key={item.label} href="#" className="flex h-16 items-center gap-3.5 pb-0.5 pl-3.5">
          {item.icon}
          {item.label}
        </a>
      ))}
    </nav>
    <hr className="mt-[65px] border-[#cbccd1]" />
    <div className="mt-[52px] flex flex-col gap-[25px]">
      {sections.map((s) => (
        <button key={s.label} className="flex h-[63px] items-center gap-3.5 rounded-xl border border-[#cbccd1] pb-0.5 pl-[21px]">
          <span className="flex w-[30px] justify-center">{s.icon}</span>
          {s.label}
        </button>
      ))}
    </div>
    <div className="mt-[119px] flex h-[74px] items-center justify-center gap-[52px]">
      <a href="#" aria-label="Telegram"><TelegramLogo /></a>
      <a href="#" aria-label="Instagram"><InstagramLogo /></a>
      <a href="#" aria-label="Website"><GlobeLogo /></a>
    </div>
    <p className="mt-9 text-center text-[21px] leading-8">All rights reserved © GO OFFER 2026</p>
  </aside>
);

const ConfigPage = () => {
  const [activeTab, setActiveTab] = useState(tabs[0]);
  const [excludeInactive, setExcludeInactive] = useState(true);

  return (
    <main className="min-w-0 flex-1 font-['Noto_Sans_CJK_SC',sans-serif] text-[23px] text-[#31333f]">
      <div className="flex h-[94px] items-center justify-end pr-[41px] text-[20px]">
        <MdAccessibleForward className="mr-6 size-10 text-[#83848c]" />
        <button>Stop</button>
        <button className="ml-[42px]">Deploy</button>
        <button aria-label="Menu" className="ml-8">
          <Pic w={20} h={24}>
            <g fill="#31333f">
              <circle cx="10" cy="4" r="2.600" />
              <circle cx="10" cy="12" r="2.600" />
              <circle cx="10" cy="20" r="2.600" />
            </g>
          </Pic>
        </button>
      </div>
      <div className="px-32 pt-[184px]">
        <h1 className="text-[63px] leading-[76px] font-bold [-webkit-text-stroke:1px_#31333f]">Config | Mentees</h1>
        <label className="mt-[34px] flex h-[38px] items-center gap-4">
          <span className="relative flex size-[26px]">
            <input
              type="checkbox"
              checked={excludeInactive}
              onChange={(e) => setExcludeInactive(e.target.checked)}
              className="peer size-[26px] appearance-none rounded-md border-2 border-[#cbccd1] checked:border-[#ec5953] checked:bg-[#ec5953]"
            />
            <Line w={26} h={26} sw={4} className="pointer-events-none absolute inset-0 hidden text-white peer-checked:block">
              <path d="M4 13l6 7L21 7" />
            </Line>
          </span>
          <span className="pb-0.5">Exclude Inactive Mentee</span>
        </label>
        <div role="tablist" className="mt-[27px] flex gap-[26px] text-[20px] leading-[60px] shadow-[inset_0_-3px_0_#e6e7e9]">
          {tabs.map((tab) => (
            <button
              key={tab}
              role="tab"
              aria-selected={tab === activeTab}
              onClick={() => setActiveTab(tab)}
              className={`border-b-3 pb-[3px] ${tab === activeTab ? 'border-[#ec5953] text-[#ec5953]' : 'border-transparent'}`}
            >
              {tab}
            </button>
          ))}
        </div>
        <label htmlFor="action" className="mt-[26px] block text-[20px] leading-9">Select Action</label>
        <div className="mt-2 flex h-16 items-center rounded-xl border border-[#eca5a3] bg-[#f0f1f6] pr-[23px] pl-5">
          <GradCap />
          <select id="action" className="ml-[5px] h-full flex-1 appearance-none bg-transparent pb-[3px] outline-none">
            <option>Assign Curator To Mentee</option>
          </select>
          <Line w={18} h={12} sw={4}>
            <path d="M2 2l7 7 7-7" />
          </Line>
        </div>
        <div role="alert" className="relative mt-[26px] flex h-[90px] items-center rounded-xl bg-[#e9f1fd] px-[26px] pb-0.5 text-[#1f519f]">
          <p>
            <mark className="bg-[#d2bfde] pb-1 text-inherit">No cur</mark>ators found. Create a mentee with CURATOR role first.
          </p>
          <svg width="16" height="36" viewBox="0 0 16 36" className="absolute top-6 left-[110px]" fill="none" aria-hidden="true">
            <path d="M2 2q6 0 6 4v24q0 4-6 4M14 2q-6 0-6 4v24q0 4 6 4" stroke="#fff" strokeWidth="5" />
            <path d="M2 2q6 0 6 4v24q0 4-6 4M14 2q-6 0-6 4v24q0 4 6 4" stroke="#111" strokeWidth="2.500" />
          </svg>
        </div>
      </div>
    </main>
  );
};

const ToolRail = () => (
  <div className="flex w-[90px] shrink-0 flex-col items-center bg-white pt-2 pb-2 pl-0.5 text-[#5f6066]">
    {sideTools.map((t) => (
      <button key={t.name} aria-label={t.name} className="flex h-18 w-15 items-center justify-center">
        {t.icon}
      </button>
    ))}
    <button aria-label="Settings" className="mt-auto flex h-18 w-15 items-center justify-center">
      <GearIcon />
    </button>
  </div>
);

export default function App() {
  return (
    <div className="flex min-h-screen flex-col bg-[#e6e5ec] font-[Inter,sans-serif]">
      <div className="flex h-[78px] shrink-0 items-start justify-end bg-black pt-6 pr-[25px]">
        <span className="size-4 rounded-full bg-[#f5a13c]" />
      </div>
      <div className="flex flex-1 flex-col rounded-t-[20px] bg-white">
        <Toolbar />
        <BookmarkBar />
        <div className="flex flex-1">
          <TabRail />
          <Sidebar />
          <ConfigPage />
          <ToolRail />
        </div>
      </div>
    </div>
  );
}
